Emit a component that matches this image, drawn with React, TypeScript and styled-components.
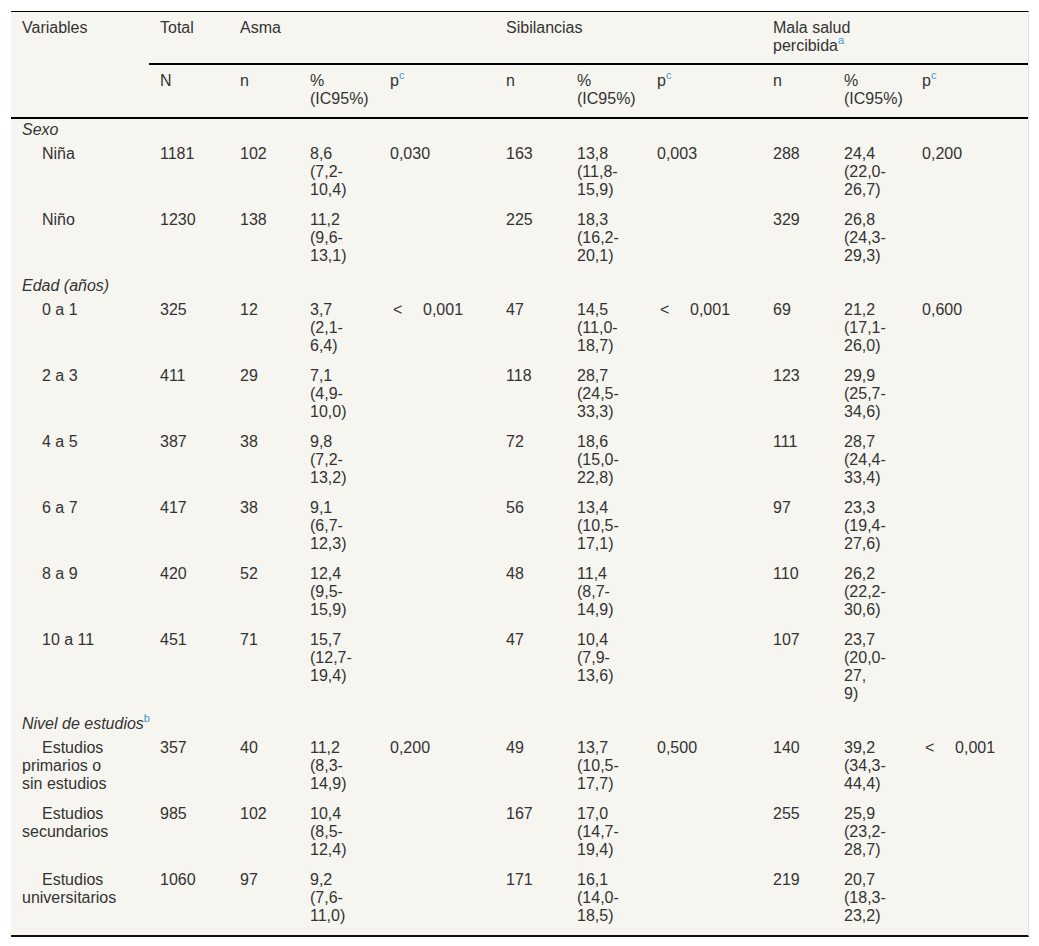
import React from "react";
import styled, { createGlobalStyle } from "styled-components";

const GlobalStyle = createGlobalStyle`
  *, *::before, *::after { box-sizing: border-box; }
  body {
    margin: 0;
    background: #ffffff;
    font-family: "Liberation Sans", Arial, Helvetica, sans-serif;
  }
`;

const Page = styled.div`
  padding: 11px 10px 0 11px;
`;

const Table = styled.table`
  width: 1018px;
  table-layout: fixed;
  border-collapse: separate;
  border-spacing: 0;
  background: #f7f5ef;
  border-top: 1px solid #000;
  border-right: 1px solid #e2e2e2;
  border-bottom: 2px solid #111;
  font-size: 16px;
  line-height: 18px;
  color: #333;
`;

const HeadCell = styled.th<{ $rule?: boolean; $last?: boolean }>`
  text-align: left;
  vertical-align: top;
  font-weight: normal;
  white-space: nowrap;
  padding: 7px 6px ${(p) => (p.$last ? "9px" : "8px")} 11px;
  border-bottom: ${(p) => (p.$rule ? "2px solid #000" : "none")};
`;

const Cell = styled.td<{ $indent?: boolean }>`
  vertical-align: top;
  white-space: nowrap;
  padding: 2px 6px 10px 11px;
  text-indent: ${(p) => (p.$indent ? "20px" : "0")};
`;

const GroupCell = styled.td`
  vertical-align: top;
  white-space: nowrap;
  padding: 2px 6px 4px 11px;
  font-style: italic;
`;

const Sup = styled.sup`
  font-size: 11px;
  line-height: 0;
  vertical-align: baseline;
  position: relative;
  top: -7px;
  color: #3d9ad6;
  font-style: normal;
`;

const Lt = styled.span`
  display: inline-block;
  margin-left: 3px;
  width: 30px;
`;

type Row = {
  label: string[];
  total: string;
  a: [string, string, string];
  s: [string, string, string];
  m: [string, string, string];
};

type Group = { title: string; sup?: string; rows: Row[] };

const groups: Group[] = [
  {
    title: "Sexo",
    rows: [
      { label: ["Niña"], total: "1181", a: ["102", "8,6|(7,2-|10,4)", "0,030"], s: ["163", "13,8|(11,8-|15,9)", "0,003"], m: ["288", "24,4|(22,0-|26,7)", "0,200"] },
      { label: ["Niño"], total: "1230", a: ["138", "11,2|(9,6-|13,1)", ""], s: ["225", "18,3|(16,2-|20,1)", ""], m: ["329", "26,8|(24,3-|29,3)", ""] },
    ],
  },
  {
    title: "Edad (años)",
    rows: [
      { label: ["0 a 1"], total: "325", a: ["12", "3,7|(2,1-|6,4)", "<0,001"], s: ["47", "14,5|(11,0-|18,7)", "<0,001"], m: ["69", "21,2|(17,1-|26,0)", "0,600"] },
      { label: ["2 a 3"], total: "411", a: ["29", "7,1|(4,9-|10,0)", ""], s: ["118", "28,7|(24,5-|33,3)", ""], m: ["123", "29,9|(25,7-|34,6)", ""] },
      { label: ["4 a 5"], total: "387", a: ["38", "9,8|(7,2-|13,2)", ""], s: ["72", "18,6|(15,0-|22,8)", ""], m: ["111", "28,7|(24,4-|33,4)", ""] },
      { label: ["6 a 7"], total: "417", a: ["38", "9,1|(6,7-|12,3)", ""], s: ["56", "13,4|(10,5-|17,1)", ""], m: ["97", "23,3|(19,4-|27,6)", ""] },
      { label: ["8 a 9"], total: "420", a: ["52", "12,4|(9,5-|15,9)", ""], s: ["48", "11,4|(8,7-|14,9)", ""], m: ["110", "26,2|(22,2-|30,6)", ""] },
      { label: ["10 a 11"], total: "451", a: ["71", "15,7|(12,7-|19,4)", ""], s: ["47", "10,4|(7,9-|13,6)", ""], m: ["107", "23,7|(20,0-|27,|9)", ""] },
    ],
  },
  {
    title: "Nivel de estudios",
    sup: "b",
    rows: [
      { label: ["Estudios", "primarios o", "sin estudios"], total: "357", a: ["40", "11,2|(8,3-|14,9)", "0,200"], s: ["49", "13,7|(10,5-|17,7)", "0,500"], m: ["140", "39,2|(34,3-|44,4)", "<0,001"] },
      { label: ["Estudios", "secundarios"], total: "985", a: ["102", "10,4|(8,5-|12,4)", ""], s: ["167", "17,0|(14,7-|19,4)", ""], m: ["255", "25,9|(23,2-|28,7)", ""] },
      { label: ["Estudios", "universitarios"], total: "1060", a: ["97", "9,2|(7,6-|11,0)", ""], s: ["171", "16,1|(14,0-|18,5)", ""], m: ["219", "20,7|(18,3-|23,2)", ""] },
    ],
  },
];

const colWidths = [138, 80, 70, 80, 116, 71, 80, 116, 71, 78, 117];

const Lines: React.FC<{ lines: string[] }> = ({ lines }) => (
  <>
    {lines.map((l, i) => (
      <React.Fragment key={i}>
        {i > 0 && <br />}
        {l}
      </React.Fragment>
    ))}
  </>
);

const PValue: React.FC<{ v: string }> = ({ v }) =>
  v.startsWith("<") ? (
    <>
      <Lt>&lt;</Lt>
      {v.slice(1)}
    </>
  ) : (
    <>{v}</>
  );

const Triple: React.FC<{ t: [string, string, string] }> = ({ t }) => (
  <>
    <Cell>{t[0]}</Cell>
    <Cell>
      <Lines lines={t[1].split("|")} />
    </Cell>
    <Cell>
      <PValue v={t[2]} />
    </Cell>
  </>
);

export default function App() {
  return (
    <Page>
      <GlobalStyle />
      <Table>
        <colgroup>
          {colWidths.map((w, i) => (
            <col key={i} style={{ width: w }} />
          ))}
        </colgroup>
        <thead>
          <tr>
            <HeadCell rowSpan={2} $rule $last>
              Variables
            </HeadCell>
            <HeadCell $rule>Total</HeadCell>
            <HeadCell colSpan={3} $rule>
              Asma
            </HeadCell>
            <HeadCell colSpan={3} $rule>
              Sibilancias
            </HeadCell>
            <HeadCell colSpan={3} $rule>
              Mala salud
              <br />
              percibida<Sup>a</Sup>
            </HeadCell>
          </tr>
          <tr>
            <HeadCell $rule $last>N</HeadCell>
            {[0, 1, 2].map((k) => (
              <React.Fragment key={k}>
                <HeadCell $rule $last>n</HeadCell>
                <HeadCell $rule $last>
                  %
                  <br />
                  (IC95%)
                </HeadCell>
                <HeadCell $rule $last>
                  p<Sup>c</Sup>
                </HeadCell>
              </React.Fragment>
            ))}
          </tr>
        </thead>
        <tbody>
          {groups.map((g) => (
            <React.Fragment key={g.title}>
              <tr>
                <GroupCell colSpan={11}>
                  {g.title}
                  {g.sup && <Sup>{g.sup}</Sup>}
                </GroupCell>
              </tr>
              {g.rows.map((r, i) => (
                <tr key={i}>
                  <Cell $indent>
                    <Lines lines={r.label} />
                  </Cell>
                  <Cell>{r.total}</Cell>
                  <Triple t={r.a} />
                  <Triple t={r.s} />
                  <Triple t={r.m} />
                </tr>
              ))}
            </React.Fragment>
          ))}
        </tbody>
      </Table>
    </Page>
  );
}
